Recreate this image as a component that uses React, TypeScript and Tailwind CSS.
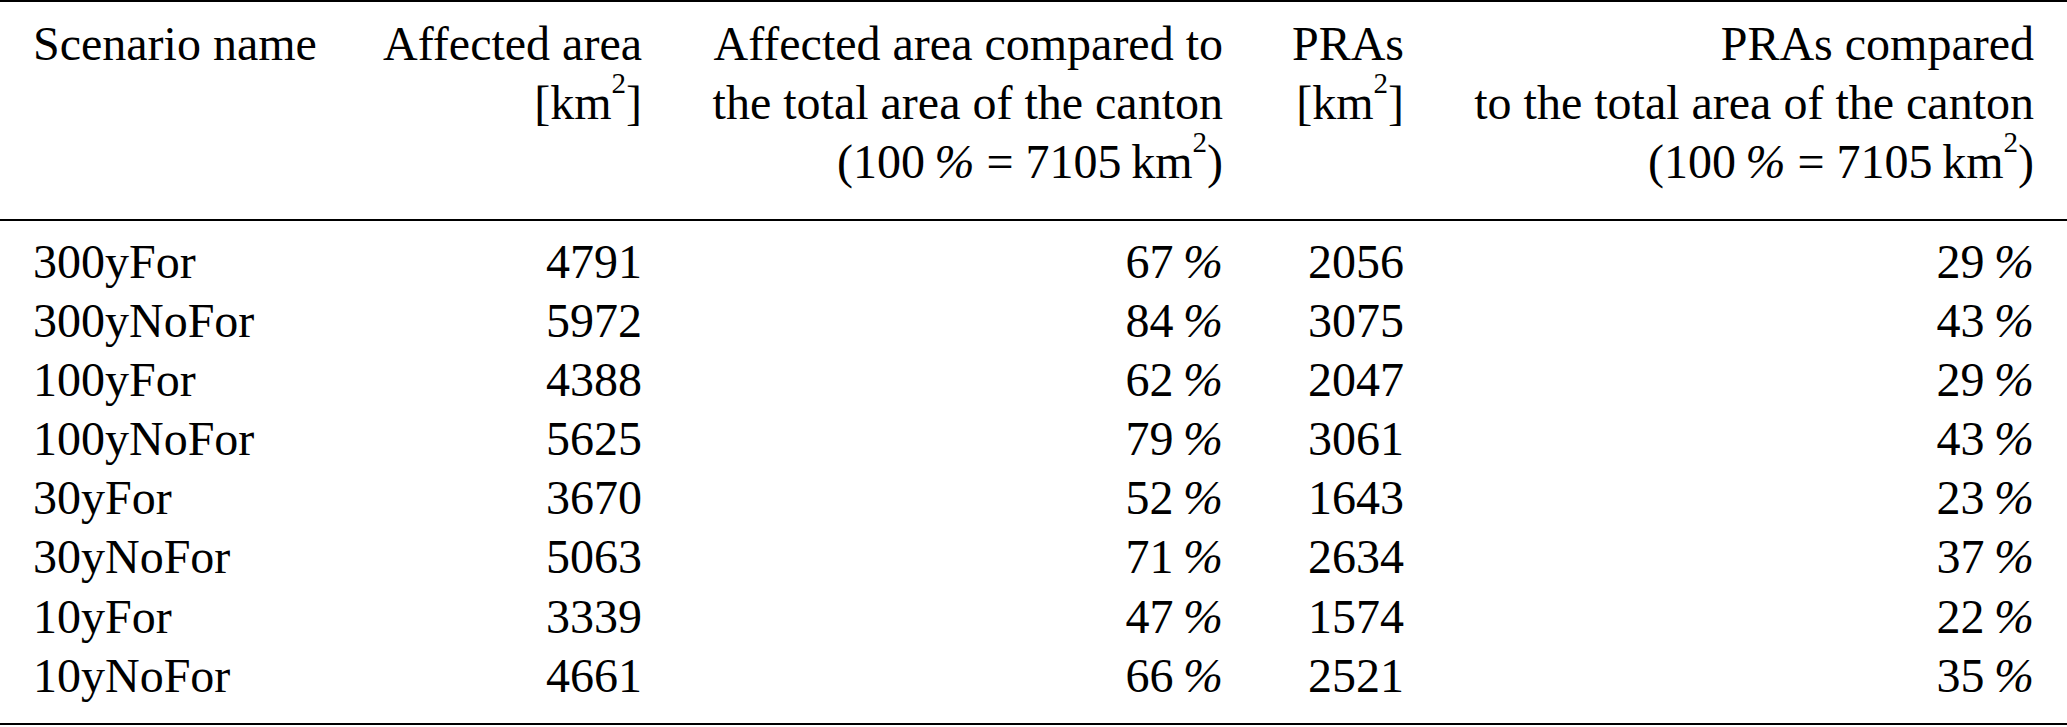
import React from 'react';

const rows = [
  { name: '300yFor', area: '4791', areaPct: '67', pra: '2056', praPct: '29' },
  { name: '300yNoFor', area: '5972', areaPct: '84', pra: '3075', praPct: '43' },
  { name: '100yFor', area: '4388', areaPct: '62', pra: '2047', praPct: '29' },
  { name: '100yNoFor', area: '5625', areaPct: '79', pra: '3061', praPct: '43' },
  { name: '30yFor', area: '3670', areaPct: '52', pra: '1643', praPct: '23' },
  { name: '30yNoFor', area: '5063', areaPct: '71', pra: '2634', praPct: '37' },
  { name: '10yFor', area: '3339', areaPct: '47', pra: '1574', praPct: '22' },
  { name: '10yNoFor', area: '4661', areaPct: '66', pra: '2521', praPct: '35' },
];

const cols = 'grid grid-cols-[307px_302px_581px_181px_630px] px-[33px]';

// superscript two, raised like the LaTeX one
const Sq = () => <span className="relative -top-[26px] text-[29px] leading-none">2</span>;

const Pct = () => <span className="italic">%</span>;

const Total = () => (
  <>
    (100{'\u2009'}
    <Pct /> = 7105{'\u2009'}km<Sq />)
  </>
);

export default function App() {
  return (
    <div
      className="w-[2067px] h-[727px] bg-white text-black text-[48px] leading-[59px]"
      style={{ fontFamily: '"Liberation Serif", "Times New Roman", serif' }}
    >
      <div className="h-[2px] bg-black" />

      {/* header */}
      <div className={`${cols} pt-[12px] pb-[28px]`}>
        <div>Scenario name</div>
        <div className="text-right">
          Affected area
          <br />
          [km<Sq />]
        </div>
        <div className="text-right">
          Affected area compared to
          <br />
          the total area of the canton
          <br />
          <Total />
        </div>
        <div className="text-right">
          PRAs
          <br />
          [km<Sq />]
        </div>
        <div className="text-right">
          PRAs compared
          <br />
          to the total area of the canton
          <br />
          <Total />
        </div>
      </div>

      <div className="h-[1.5px] bg-black" />

      {/* body */}
      <div className="pt-[11px] pb-[18px]">
        {rows.map((r) => (
          <div key={r.name} className={`${cols} h-[59.2px]`}>
            <div>{r.name}</div>
            <div className="text-right">{r.area}</div>
            <div className="text-right">
              {r.areaPct}
              {'\u2009'}
              <Pct />
            </div>
            <div className="text-right">{r.pra}</div>
            <div className="text-right">
              {r.praPct}
              {'\u2009'}
              <Pct />
            </div>
          </div>
        ))}
      </div>

      <div className="h-[2px] bg-black" />
    </div>
  );
}
